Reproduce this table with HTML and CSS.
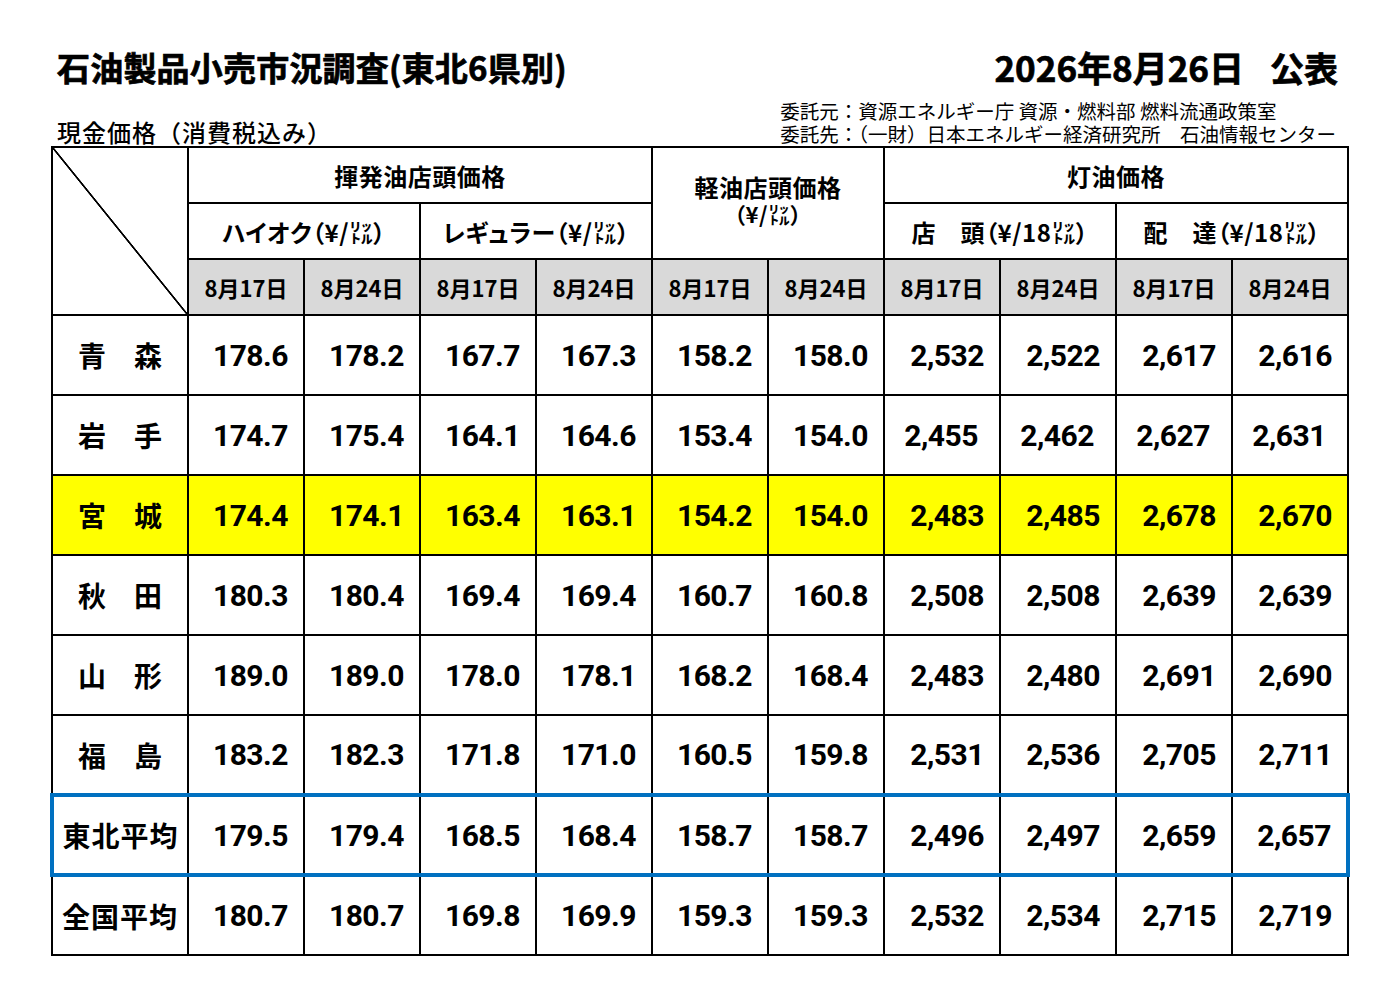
FILE: index.html
```html
<!DOCTYPE html>
<html lang="ja">
<head>
<meta charset="utf-8">
<title>石油製品小売市況調査(東北6県別)</title>
<link rel="stylesheet" href="styles.css">
</head>
<body>
<div class="sheet">
  <div class="head">
    <h1 class="title">石油製品小売市況調査(東北6県別)</h1>
    <div class="pub">2026年8月26日<span class="pub-tag">公表</span></div>
  </div>
  <div class="sub">
    <div class="basis">現金価格（消費税込み）</div>
    <div class="org">
      <div class="org-line">委託元：資源エネルギー庁 資源・燃料部 燃料流通政策室</div>
      <div class="org-line">委託先：（一財）日本エネルギー経済研究所　石油情報センター</div>
    </div>
  </div>
  <table class="grid">
    <colgroup>
      <col class="c-label">
      <col><col><col><col><col><col><col><col><col><col>
    </colgroup>
    <thead>
      <tr class="hrow">
        <td class="corner" rowspan="3"></td>
        <th colspan="4">揮発油店頭価格</th>
        <th colspan="2" rowspan="2" class="diesel"><div class="d-name">軽油店頭価格</div><div class="d-unit">（¥/㍑）</div></th>
        <th colspan="4">灯油価格</th>
      </tr>
      <tr class="hrow">
        <th colspan="2">ハイオク（¥/㍑）</th>
        <th colspan="2">レギュラー（¥/㍑）</th>
        <th colspan="2">店　頭（¥/18㍑）</th>
        <th colspan="2">配　達（¥/18㍑）</th>
      </tr>
      <tr class="hrow dates">
        <th>8月17日</th><th>8月24日</th>
        <th>8月17日</th><th>8月24日</th>
        <th>8月17日</th><th>8月24日</th>
        <th>8月17日</th><th>8月24日</th>
        <th>8月17日</th><th>8月24日</th>
      </tr>
    </thead>
    <tbody>
      <tr>
        <th class="label">青　森</th>
        <td>178.6</td><td>178.2</td><td>167.7</td><td>167.3</td><td>158.2</td><td>158.0</td><td>2,532</td><td>2,522</td><td>2,617</td><td>2,616</td>
      </tr>
      <tr>
        <th class="label">岩　手</th>
        <td>174.7</td><td>175.4</td><td>164.1</td><td>164.6</td><td>153.4</td><td>154.0</td><td class="shift">2,455</td><td class="shift">2,462</td><td class="shift">2,627</td><td class="shift">2,631</td>
      </tr>
      <tr class="hl">
        <th class="label">宮　城</th>
        <td>174.4</td><td>174.1</td><td>163.4</td><td>163.1</td><td>154.2</td><td>154.0</td><td>2,483</td><td>2,485</td><td>2,678</td><td>2,670</td>
      </tr>
      <tr>
        <th class="label">秋　田</th>
        <td>180.3</td><td>180.4</td><td>169.4</td><td>169.4</td><td>160.7</td><td>160.8</td><td>2,508</td><td>2,508</td><td>2,639</td><td>2,639</td>
      </tr>
      <tr>
        <th class="label">山　形</th>
        <td>189.0</td><td>189.0</td><td>178.0</td><td>178.1</td><td>168.2</td><td>168.4</td><td>2,483</td><td>2,480</td><td>2,691</td><td>2,690</td>
      </tr>
      <tr>
        <th class="label">福　島</th>
        <td>183.2</td><td>182.3</td><td>171.8</td><td>171.0</td><td>160.5</td><td>159.8</td><td>2,531</td><td>2,536</td><td>2,705</td><td>2,711</td>
      </tr>
      <tr class="avg">
        <th class="label wide">東北平均</th>
        <td>179.5</td><td>179.4</td><td>168.5</td><td>168.4</td><td>158.7</td><td>158.7</td><td>2,496</td><td>2,497</td><td>2,659</td><td>2,657</td>
      </tr>
      <tr>
        <th class="label wide">全国平均</th>
        <td>180.7</td><td>180.7</td><td>169.8</td><td>169.9</td><td>159.3</td><td>159.3</td><td>2,532</td><td>2,534</td><td>2,715</td><td>2,719</td>
      </tr>
    </tbody>
  </table>
</div>
</body>
</html>
```
FILE: styles.css
```css
html, body {
  margin: 0;
  padding: 0;
  background: #ffffff;
}
body {
  font-family: "Noto Sans CJK JP", "Noto Sans", sans-serif;
  color: #000;
}
.sheet {
  width: 1300px;
  margin-left: 50px;
}
.head {
  display: flex;
  justify-content: space-between;
  align-items: center;
  margin-top: 47px;
  height: 40px;
}
.title {
  margin: 0 0 0 7px;
  font-size: 33px;
  font-weight: 700;
  line-height: 40px;
  letter-spacing: 0.2px;
  -webkit-text-stroke: 0.7px #000;
}
.pub {
  margin-right: 12px;
  font-size: 35px;
  font-weight: 700;
  line-height: 40px;
  -webkit-text-stroke: 0.7px #000;
}
.pub-tag {
  margin-left: 26px;
  font-size: 34px;
}
.sub {
  display: flex;
  justify-content: space-between;
  align-items: flex-end;
  height: 59px;
}
.basis {
  margin-left: 7px;
  font-size: 24px;
  font-weight: 500;
  letter-spacing: 1px;
  line-height: 28px;
}
.org {
  margin-right: 14px;
  font-size: 19.5px;
  padding-bottom: 1px;
}
.org-line {
  height: 23px;
  line-height: 23px;
  white-space: nowrap;
}
.grid {
  border-collapse: collapse;
  table-layout: fixed;
  width: 1300px;
}
.grid col.c-label {
  width: 136px;
}
.grid th, .grid td {
  border: 2px solid #000;
  padding: 0;
}
.hrow {
  height: 56px;
}
.grid .hrow th {
  font-size: 24px;
  font-weight: 700;
  text-align: center;
  vertical-align: middle;
  letter-spacing: 0.5px;
  font-feature-settings: "palt";
}
.grid .diesel {
  padding-bottom: 8px;
}
.d-name {
  height: 28px;
  line-height: 28px;
}
.d-unit {
  height: 24px;
  line-height: 24px;
  font-size: 22px;
}
.grid .dates th {
  background: #d9d9d9;
  font-size: 22px;
  letter-spacing: 0;
  font-feature-settings: normal;
}
.corner {
  background: linear-gradient(to top right, transparent calc(50% - 1.2px), #000 calc(50% - 0.6px), #000 calc(50% + 0.6px), transparent calc(50% + 1.2px));
}
tbody tr {
  height: 80px;
}
.grid tbody td {
  font-family: Roboto, "Liberation Sans", sans-serif;
  font-weight: 700;
  font-size: 30px;
  letter-spacing: -0.5px;
  text-align: right;
  padding-right: 15px;
  vertical-align: middle;
}
.grid tbody td.shift {
  padding-right: 21px;
}
.grid .label {
  font-size: 28px;
  font-weight: 700;
  text-align: center;
  vertical-align: middle;
}
.grid .label.wide {
  letter-spacing: 1px;
}
.hl th, .hl td {
  background: #ffff00;
}
.grid .avg th, .grid .avg td {
  border-top: 4px solid #0070c0;
  border-bottom: 4px solid #0070c0;
}
.grid .avg th {
  border-left: 4px solid #0070c0;
}
.grid .avg td:last-child {
  border-right: 4px solid #0070c0;
}
```
